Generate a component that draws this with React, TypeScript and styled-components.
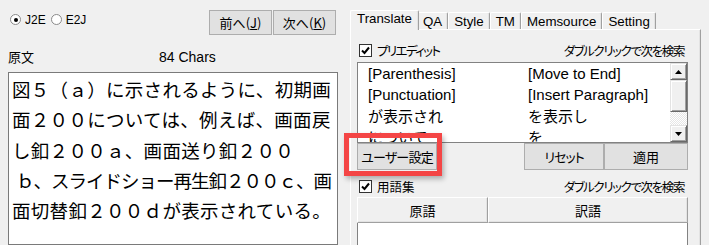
import React from "react";
import styled, { createGlobalStyle } from "styled-components";

const Global = createGlobalStyle`
  html, body { margin: 0; padding: 0; background: #f0f0f0; }
  body { font-family: "Liberation Sans", "Noto Sans CJK JP", sans-serif; color: #000; }
`;

const UI = `"Liberation Sans", "Noto Sans CJK JP", sans-serif`;
const JP = `"Noto Sans CJK JP", "Liberation Sans", sans-serif`;

const Window = styled.div`
  position: relative;
  width: 709px;
  height: 245px;
  overflow: hidden;
  display: flex;
  background: #f0f0f0;
`;

const LeftPanel = styled.div`
  width: 330px;
  margin-left: 8px;
  padding-top: 10px;
  display: flex;
  flex-direction: column;
`;

const TopRow = styled.div`
  display: flex;
  justify-content: space-between;
  align-items: flex-start;
  height: 25px;
  padding-right: 2px;
`;

const RadioGroup = styled.div`
  display: flex;
  align-items: center;
  margin-top: 3px;
  padding-left: 2px;
  font-family: ${UI};
  font-size: 12px;
  height: 13px;
`;

const RadioItem = styled.label`
  display: flex;
  align-items: center;
  gap: 4px;
  margin-right: 5px;
`;

const RadioCircle = styled.span<{ $checked?: boolean }>`
  width: 11px;
  height: 11px;
  border-radius: 50%;
  border: 1px solid #8a8a8a;
  background: #fff;
  box-sizing: border-box;
  display: flex;
  align-items: center;
  justify-content: center;
  &::after {
    content: "";
    width: 4px;
    height: 4px;
    border-radius: 50%;
    background: ${(p) => (p.$checked ? "#000" : "transparent")};
  }
`;

const NavButtons = styled.div`
  display: flex;
  gap: 1px;
`;

const Button = styled.button<{ $w: number; $h?: number; $ls?: number }>`
  width: ${(p) => p.$w}px;
  height: ${(p) => p.$h ?? 25}px;
  box-sizing: border-box;
  background: #e1e1e1;
  border: 1px solid #adadad;
  border-radius: 0;
  padding: 0;
  font-family: ${JP};
  font-size: 13px;
  letter-spacing: ${(p) => p.$ls ?? 0}px;
  color: #000;
  display: flex;
  align-items: center;
  justify-content: center;
  font-feature-settings: "palt";
  u { text-decoration: underline; }
`;

const LabelRow = styled.div`
  display: grid;
  grid-template-columns: 151px 1fr;
  margin-top: 12px;
  height: 15px;
  align-items: center;
`;

const LabelJp = styled.span`
  font-family: ${JP};
  font-size: 13px;
`;

const Counter = styled.span`
  font-family: ${UI};
  font-size: 14px;
`;

const SourceBox = styled.div`
  margin-top: 10px;
  height: 200px;
  background: #fff;
  border: 1px solid #7a7a7a;
  padding: 1px 0 0 3px;
  font-family: ${JP};
  font-size: 18.5px;
  line-height: 30.3px;
  overflow: hidden;
`;

const SourceLine = styled.div<{ $ls?: number; $indent?: number }>`
  white-space: nowrap;
  letter-spacing: ${(p) => p.$ls ?? 0.3}px;
  padding-left: ${(p) => p.$indent ?? 0}px;
`;

const RightPanel = styled.div`
  width: 351px;
  margin-left: 12px;
  display: flex;
  flex-direction: column;
`;

const TabStrip = styled.div`
  height: 29px;
  display: flex;
  align-items: flex-end;
  padding-left: 2px;
  position: relative;
  z-index: 1;
`;

const Tab = styled.div<{ $active?: boolean }>`
  box-sizing: border-box;
  height: ${(p) => (p.$active ? 20 : 17)}px;
  margin: ${(p) => (p.$active ? "0 -2px -1px -2px" : "0")};
  padding: ${(p) => (p.$active ? "1px 6px 0 6px" : "2px 5px 0 5px")};
  font-family: ${UI};
  font-size: 13.3px;
  line-height: 14px;
  background: #f0f0f0;
  border-top: 1px solid #fff;
  border-left: 1px solid #fff;
  border-right: 1px solid #a0a0a0;
  box-shadow: inset -1px 0 0 #e3e3e3;
  border-radius: 2px 2px 0 0;
  position: relative;
  z-index: ${(p) => (p.$active ? 2 : 0)};
`;

const Pane = styled.div`
  flex: 1;
  border-top: 1px solid #fff;
  border-left: 1px solid #fff;
  border-right: 1px solid #a0a0a0;
  box-shadow: inset -1px 0 0 #e3e3e3;
  padding: 13px 12px 0 6px;
  display: flex;
  flex-direction: column;
`;

const CheckRow = styled.div<{ $mt?: number }>`
  display: flex;
  align-items: center;
  justify-content: space-between;
  height: 14px;
  margin-top: ${(p) => p.$mt ?? 0}px;
  padding: 0 4px 0 2px;
  font-family: ${JP};
  font-size: 12.5px;
  font-feature-settings: "palt";
`;

const CheckLabel = styled.label`
  display: flex;
  align-items: center;
  gap: 5px;
`;

const CheckText = styled.span`
  letter-spacing: -1.6px;
`;

const CheckBox = styled.span`
  width: 13px;
  height: 13px;
  box-sizing: border-box;
  border: 1px solid #333;
  background: #fff;
  display: flex;
  align-items: center;
  justify-content: center;
`;

const Hint = styled.span`
  letter-spacing: -1.4px;
`;

const ListBox = styled.div`
  margin-top: 5px;
  height: 81px;
  box-sizing: border-box;
  background: #fff;
  border: 1px solid #828282;
  display: flex;
  overflow: hidden;
`;

const ListRows = styled.div`
  flex: 1;
  padding-left: 10px;
`;

const ListRow = styled.div`
  display: grid;
  grid-template-columns: 160px 1fr;
  height: 21px;
  align-items: center;
  font-family: ${UI};
  font-size: 15px;
  white-space: nowrap;
`;

const ScrollBar = styled.div`
  width: 17px;
  display: flex;
  flex-direction: column;
`;

const ScrollButton = styled.div`
  height: 17px;
  box-sizing: border-box;
  background: #f0f0f0;
  border: 1px solid;
  border-color: #e3e3e3 #696969 #696969 #e3e3e3;
  box-shadow: inset 1px 1px 0 #fff, inset -1px -1px 0 #a0a0a0;
  display: flex;
  align-items: center;
  justify-content: center;
`;

const ScrollThumb = styled(ScrollButton)`
  height: 32px;
`;

const ScrollTrack = styled.div`
  flex: 1;
  background-color: #fff;
  background-image: conic-gradient(#e6e6e6 25%, #fff 0 50%, #e6e6e6 0 75%, #fff 0);
  background-size: 2px 2px;
`;

const ButtonRow = styled.div`
  display: flex;
  height: 27px;
`;

const Spacer = styled.div`
  flex: 1;
`;

const Header = styled.div`
  margin-top: 4px;
  display: grid;
  grid-template-columns: 131px 1fr;
  height: 26px;
`;

const HeaderCell = styled.div`
  box-sizing: border-box;
  background: #f0f0f0;
  border: 1px solid;
  border-color: #fff #a0a0a0 #a0a0a0 #fff;
  box-shadow: inset -1px -1px 0 #e3e3e3;
  display: flex;
  align-items: center;
  justify-content: center;
  font-family: ${JP};
  font-size: 13px;
`;

const GlossaryList = styled.div`
  flex: 1;
  background: #fff;
  border-left: 1px solid #828282;
  border-right: 1px solid #828282;
`;

const Highlight = styled.div`
  position: absolute;
  left: 344px;
  top: 133px;
  width: 98px;
  height: 43px;
  box-sizing: border-box;
  border: 5px solid #f44545;
  box-shadow: 2px 3px 5px rgba(0, 0, 0, 0.28);
  pointer-events: none;
`;

const Arrow = ({ up }: { up?: boolean }) => (
  <svg width="7" height="4" viewBox="0 0 7 4">
    <path d={up ? "M3.5 0 L7 4 L0 4 Z" : "M0 0 L7 0 L3.5 4 Z"} fill="#000" />
  </svg>
);

const Check = () => (
  <svg width="9" height="9" viewBox="0 0 9 9">
    <path d="M1 4.5 L3.5 7 L8 1.5" stroke="#000" strokeWidth="2" fill="none" />
  </svg>
);

export default function App() {
  return (
    <>
      <Global />
      <Window>
        <LeftPanel>
          <TopRow>
            <RadioGroup>
              <RadioItem>
                <RadioCircle $checked />
                J2E
              </RadioItem>
              <RadioItem>
                <RadioCircle />
                E2J
              </RadioItem>
            </RadioGroup>
            <NavButtons>
              <Button $w={63}>
                前へ(<u>J</u>)
              </Button>
              <Button $w={63}>
                次へ(<u>K</u>)
              </Button>
            </NavButtons>
          </TopRow>
          <LabelRow>
            <LabelJp>原文</LabelJp>
            <Counter>84 Chars</Counter>
          </LabelRow>
          <SourceBox>
            <SourceLine>図５（ａ）に示されるように、初期画</SourceLine>
            <SourceLine>面２００については、例えば、画面戻</SourceLine>
            <SourceLine>し釦２００ａ、画面送り釦２００</SourceLine>
            <SourceLine $ls={-1} $indent={4}>ｂ、スライドショー再生釦２００ｃ、画</SourceLine>
            <SourceLine>面切替釦２００ｄが表示されている。</SourceLine>
          </SourceBox>
        </LeftPanel>
        <RightPanel>
          <TabStrip>
            <Tab $active>Translate</Tab>
            <Tab>QA</Tab>
            <Tab>Style</Tab>
            <Tab>TM</Tab>
            <Tab>Memsource</Tab>
            <Tab>Setting</Tab>
          </TabStrip>
          <Pane>
            <CheckRow>
              <CheckLabel>
                <CheckBox>
                  <Check />
                </CheckBox>
                <CheckText>プリエディット</CheckText>
              </CheckLabel>
              <Hint>ダブルクリックで次を検索</Hint>
            </CheckRow>
            <ListBox>
              <ListRows>
                <ListRow>
                  <span>[Parenthesis]</span>
                  <span>[Move to End]</span>
                </ListRow>
                <ListRow>
                  <span>[Punctuation]</span>
                  <span>[Insert Paragraph]</span>
                </ListRow>
                <ListRow>
                  <span>が表示され</span>
                  <span>を表示し</span>
                </ListRow>
                <ListRow>
                  <span>について</span>
                  <span>を</span>
                </ListRow>
              </ListRows>
              <ScrollBar>
                <ScrollButton>
                  <Arrow up />
                </ScrollButton>
                <ScrollThumb />
                <ScrollTrack />
                <ScrollButton>
                  <Arrow />
                </ScrollButton>
              </ScrollBar>
            </ListBox>
            <ButtonRow>
              <Button $w={80} $h={27} $ls={-0.8}>ユーザー設定</Button>
              <Spacer />
              <Button $w={80} $h={27} $ls={-1}>リセット</Button>
              <Button $w={84} $h={27}>適用</Button>
            </ButtonRow>
            <CheckRow $mt={9}>
              <CheckLabel>
                <CheckBox>
                  <Check />
                </CheckBox>
                <span>用語集</span>
              </CheckLabel>
              <Hint>ダブルクリックで次を検索</Hint>
            </CheckRow>
            <Header>
              <HeaderCell>原語</HeaderCell>
              <HeaderCell>訳語</HeaderCell>
            </Header>
            <GlossaryList />
          </Pane>
        </RightPanel>
        <Highlight />
      </Window>
    </>
  );
}
